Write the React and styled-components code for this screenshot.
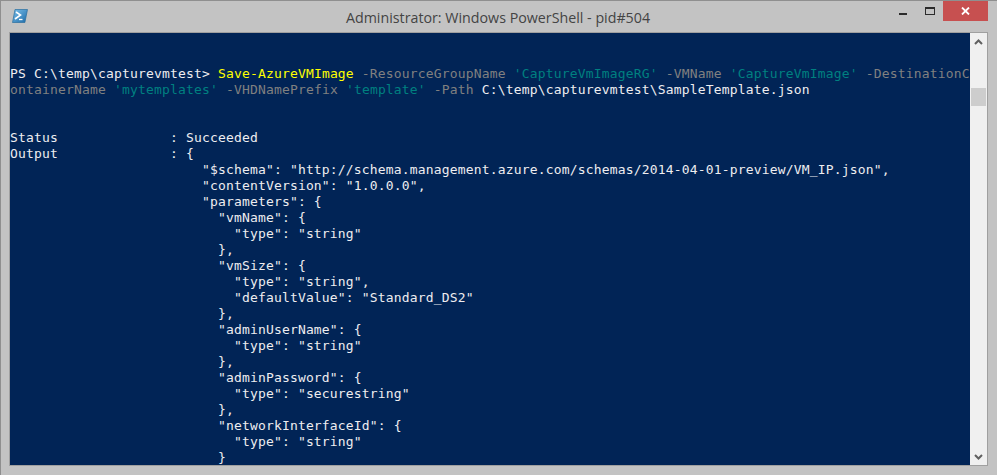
import React from "react";
import styled, { createGlobalStyle } from "styled-components";

const Global = createGlobalStyle`
  html, body { margin: 0; padding: 0; background: #c3c3c3; }
`;

const Window = styled.div`
  width: 997px;
  height: 475px;
  box-sizing: border-box;
  background: #c3c3c3;
  border: 1px solid #8f8f8f;
  border-width: 1px 0 0 1px;
  display: flex;
  flex-direction: column;
  overflow: hidden;
`;

const TitleBar = styled.header`
  height: 31px;
  flex: none;
  display: grid;
  grid-template-columns: 1fr auto 1fr;
  align-items: start;
`;

const AppIcon = styled.svg`
  display: block;
  margin: 8px 0 0 11px;
`;

const Title = styled.h1`
  margin: 7px 2px 0 0;
  font: 400 14.25px/20px "Open Sans", "Noto Sans", sans-serif;
  color: #444;
  white-space: nowrap;
`;

const Controls = styled.div`
  display: flex;
  justify-content: flex-end;
  margin-right: 9px;
`;

const Control = styled.button`
  width: ${(p) => p.$w}px;
  height: 20px;
  padding: 0;
  border: 0;
  background: ${(p) => p.$bg || "transparent"};
  display: flex;
  align-items: center;
  justify-content: center;
`;

const MinGlyph = styled.svg`
  display: block;
  margin-top: 6px;
`;

const Client = styled.main`
  height: 434px;
  flex: none;
  margin: 0 9px 0 8px;
  border: 1px solid #a0a0a0;
  display: flex;
  box-sizing: border-box;
  width: 979px;
`;

const Terminal = styled.div`
  flex: 1;
  min-width: 0;
  padding: 1px 0 0;
  background: #012456;
  color: #eeedf0;
  font: 400 13px/16px "DejaVu Sans Mono", monospace;
  letter-spacing: 0.17px;
  overflow: hidden;
`;

const Line = styled.div`
  height: 16px;
  white-space: pre;
`;

const Token = styled.span`
  color: ${(p) => ({ cmd: "#ffff00", param: "#808080", str: "#008080" })[p.$k]};
`;

const Scrollbar = styled.aside`
  width: 17px;
  flex: none;
  background: #f0f0f0;
  display: flex;
  flex-direction: column;
  align-items: center;
`;

const Arrow = styled.svg`
  display: block;
  flex: none;
  margin-top: ${(p) => p.$top}px;
  margin-bottom: ${(p) => p.$bottom || 0}px;
`;

const Thumb = styled.div`
  width: 15px;
  height: 18px;
  flex: none;
  margin-top: 43px;
  background: #cdcdcd;
`;

const Spacer = styled.div`
  flex: 1;
`;

const pad = " ".repeat(24);
const output = [
  "",
  "",
  "Status              : Succeeded",
  "Output              : {",
  pad + '"$schema": "http://schema.management.azure.com/schemas/2014-04-01-preview/VM_IP.json",',
  pad + '"contentVersion": "1.0.0.0",',
  pad + '"parameters": {',
  pad + '  "vmName": {',
  pad + '    "type": "string"',
  pad + "  },",
  pad + '  "vmSize": {',
  pad + '    "type": "string",',
  pad + '    "defaultValue": "Standard_DS2"',
  pad + "  },",
  pad + '  "adminUserName": {',
  pad + '    "type": "string"',
  pad + "  },",
  pad + '  "adminPassword": {',
  pad + '    "type": "securestring"',
  pad + "  },",
  pad + '  "networkInterfaceId": {',
  pad + '    "type": "string"',
  pad + "  }",
];

export default function App() {
  return (
    <Window>
      <Global />
      <TitleBar>
        <AppIcon width="16" height="14" viewBox="0 0 16 14">
          <defs>
            <linearGradient id="psg" x1="0" y1="0" x2="1" y2="1">
              <stop offset="0" stopColor="#7cc0ea" />
              <stop offset="1" stopColor="#1c6aa8" />
            </linearGradient>
          </defs>
          <path d="M3 .5h12.5l-2.6 13H.5z" fill="url(#psg)" stroke="#2a6f9f" strokeWidth=".7" />
          <path d="M4 3l4.5 3-5.5 4" fill="none" stroke="#fff" strokeWidth="1.6" />
          <path d="M7 10.5h3.5" stroke="#fff" strokeWidth="1.3" />
        </AppIcon>
        <Title>Administrator: Windows PowerShell - pid#504</Title>
        <Controls>
          <Control $w={28} aria-label="Minimize">
            <MinGlyph width="8" height="2" viewBox="0 0 8 2">
              <rect width="8" height="2" fill="#2b2b2b" />
            </MinGlyph>
          </Control>
          <Control $w={26} aria-label="Maximize">
            <svg width="10" height="8" viewBox="0 0 10 8">
              <rect x=".5" y="1" width="9" height="6.5" fill="none" stroke="#2b2b2b" />
              <rect width="10" height="2" fill="#2b2b2b" />
            </svg>
          </Control>
          <Control $w={45} $bg="#c75050" aria-label="Close">
            <svg width="9" height="8" viewBox="0 0 9 8">
              <path d="M1 .5l7 7M8 .5l-7 7" stroke="#fff" strokeWidth="1.8" />
            </svg>
          </Control>
        </Controls>
      </TitleBar>
      <Client>
        <Terminal>
          <Line />
          <Line />
          <Line>
            {"PS C:\\temp\\capturevmtest> "}
            <Token $k="cmd">Save-AzureVMImage</Token>
            <Token $k="param"> -ResourceGroupName </Token>
            <Token $k="str">'CaptureVmImageRG'</Token>
            <Token $k="param"> -VMName </Token>
            <Token $k="str">'CaptureVmImage'</Token>
            <Token $k="param"> -DestinationC</Token>
          </Line>
          <Line>
            <Token $k="param">ontainerName </Token>
            <Token $k="str">'mytemplates'</Token>
            <Token $k="param"> -VHDNamePrefix </Token>
            <Token $k="str">'template'</Token>
            <Token $k="param"> -Path </Token>
            {"C:\\temp\\capturevmtest\\SampleTemplate.json"}
          </Line>
          {output.map((text, i) => (
            <Line key={i}>{text}</Line>
          ))}
        </Terminal>
        <Scrollbar>
          <Arrow $top={6} width="9" height="6" viewBox="0 0 9 6">
            <path d="M1 5l3.5-3.5L8 5" fill="none" stroke="#606060" strokeWidth="2" />
          </Arrow>
          <Thumb />
          <Spacer />
          <Arrow $top={0} $bottom={5} width="9" height="6" viewBox="0 0 9 6">
            <path d="M1 1l3.5 3.5L8 1" fill="none" stroke="#606060" strokeWidth="2" />
          </Arrow>
        </Scrollbar>
      </Client>
    </Window>
  );
}
